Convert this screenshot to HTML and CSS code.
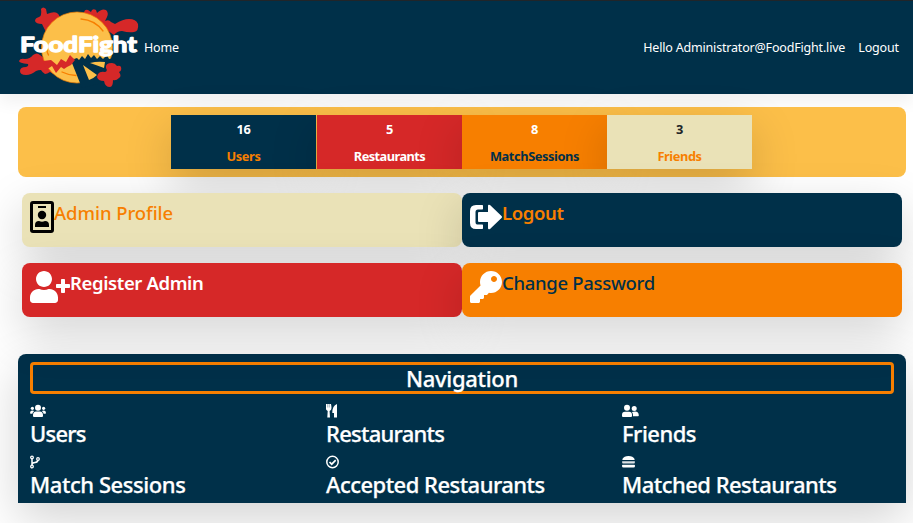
FILE: index.html
```html
<!DOCTYPE html>
<html lang="en">
<head>
<meta charset="utf-8">
<title>FoodFight</title>
<link rel="stylesheet" href="styles.css">
</head>
<body>
<header class="topbar">
  <svg class="logo" viewBox="16 5 126 84" role="img" aria-label="FoodFight">
    <g fill="#d62828">
      <path d="M41 9q2-3 5 0l1 5q7-3 10-1 4 3 2 7L48 35l-3-5-3-6q-6 0-7-3 0-3 4-4 3-1 2-8z"/>
      <path d="M84 14q0-5 4-4l3 2q1-4 5-2l1 3q5-5 9-3 3 3 1 7l-2 4q4-2 6 1l4 2q8-5 14-5 7 0 9 5 1 7-4 8-5 1-12-1-5 0-8 4z"/>
      <path d="M19 61q1-3 6-2 5 0 8-4 4-3 7 0l10 8 16 14q-5 1-7-1-6-2-9-4-3 2-5 2-3-2-4-4-3 0-5 1-5 4-10 4-6 0-6-4 0-4 6-4 3-1 2-3-9-1-9-3z"/>
    </g>
    <circle cx="77" cy="47.500" r="35.500" fill="#fcbf49" stroke="#f77f00" stroke-width=".7"/>
    <path fill="#003049" d="M70 58l4 1 3-1 2 2 3-4 3 3 3-5 3 4 3-3 3 4 3-3 3 3 4-4 2 4 6-1-1 7q-4 13-13 18l-19 5z"/>
    <path fill="#d62828" d="M43 61l8-1 6 5 4-6 5 3 4-7 5 5-4 5-4 2-3 2-3-2-5 6-4-7-6 4z"/>
    <path fill="#fcbf49" d="M83 65l14 10q-4 4-8 5zM90 63q7-2 15-1l-1 6q-8-3-14-5z"/>
    <path fill="#d62828" d="M98 74q2-3 7-2 3-1 1-4-1-5 6-5 3 0 5 3 3-1 4 1 1 4-2 5 3 4 0 6-3 3-6 2 0 7-3 7-5 0-6-6-6 0-7-4z"/>
    <path fill="none" stroke="#f77f00" stroke-width="1.300" stroke-linecap="round" d="M81 19q14 1 22 12M47 49q0 4 1.500 6M62 72q6 3 14 3.500"/>
    <text class="logo-text" x="20" y="51.500" textLength="117" lengthAdjust="spacingAndGlyphs">FoodFight</text>
  </svg>
  <a class="link home">Home</a>
  <span class="link hello">Hello Administrator@FoodFight.live</span>
  <a class="link logout">Logout</a>
</header>

<main>
  <section class="stats">
    <div class="stat navy"><b>16</b><b class="t-orange">Users</b></div>
    <div class="stat red"><b>5</b><b class="tight">Restaurants</b></div>
    <div class="stat orange"><b>8</b><b class="t-navy">MatchSessions</b></div>
    <div class="stat cream"><b class="t-dark">3</b><b class="t-orange">Friends</b></div>
  </section>

  <section class="actions">
    <div class="card cream">
      <svg width="24" height="32" viewBox="0 0 24 32"><rect x="1.500" y="1.500" width="21" height="29" rx="1.500" fill="none" stroke="#000" stroke-width="3"/><path d="M8 5h8v2H8zM5 26v-2q0-4 4-4 3 1.500 6 0 4 0 4 4v2z"/><circle cx="12" cy="14" r="4.200"/></svg>
      <span class="t-orange">Admin Profile</span>
    </div>
    <div class="card navy">
      <svg width="32" height="32" viewBox="0 0 32 32" fill="#fff"><path d="M13 4.700v3q0 .7-.7.700H8Q5.500 8.400 5.500 11v10q0 2.600 2.500 2.600h4.300q.7 0 .7.700v3q0 .7-.7.700H6q-6 0-6-6V10q0-6 6-6h6.300q.7 0 .7.700z"/><path d="M9 11h9V5q0-2 2-1l11.500 11q1 1 0 2L20 28q-2 1-2-1v-6H9q-1 0-1-1v-8q0-1 1-1z"/></svg>
      <span class="t-orange semi">Logout</span>
    </div>
    <div class="card red">
      <svg width="40" height="32" viewBox="0 0 640 512" fill="#fff"><path d="M624 208h-64v-64c0-8.800-7.200-16-16-16h-32c-8.800 0-16 7.200-16 16v64h-64c-8.800 0-16 7.200-16 16v32c0 8.800 7.200 16 16 16h64v64c0 8.800 7.200 16 16 16h32c8.800 0 16-7.200 16-16v-64h64c8.800 0 16-7.200 16-16v-32c0-8.800-7.200-16-16-16zm-400 48c70.700 0 128-57.300 128-128S294.700 0 224 0 96 57.300 96 128s57.300 128 128 128zm89.600 32h-16.700c-22.200 10.200-46.900 16-72.900 16s-50.600-5.800-72.900-16h-16.700C60.200 288 0 348.200 0 422.400V464c0 26.500 21.500 48 48 48h352c26.500 0 48-21.500 48-48v-41.600c0-74.200-60.200-134.400-134.400-134.400z"/></svg>
      <span class="semi">Register Admin</span>
    </div>
    <div class="card orange">
      <svg width="32" height="32" viewBox="0 0 512 512" fill="#fff"><path d="M512 176c0 97.200-78.800 176-176 176-11.200 0-22.200-1.100-32.800-3.100l-24 27A24 24 0 0 1 261.200 384H224v40c0 13.300-10.700 24-24 24h-40v40c0 13.300-10.700 24-24 24H24c-13.300 0-24-10.700-24-24v-78.100c0-6.400 2.500-12.500 7-17l161.800-161.800C162.900 213.800 160 195.300 160 176 160 78.800 238.800 0 336 0s176 78.500 176 176zM336 128c0 26.500 21.500 48 48 48s48-21.500 48-48-21.500-48-48-48-48 21.500-48 48z"/></svg>
      <span class="t-navy snug">Change Password</span>
    </div>
  </section>

  <section class="nav navy">
    <h2>Navigation</h2>
    <div class="nav-grid">
      <a class="item"><svg width="16" height="13" viewBox="0 0 16 13"><circle cx="8" cy="3.200" r="3"/><circle cx="2.400" cy="3.800" r="1.600"/><circle cx="13.600" cy="3.800" r="1.600"/><path d="M3 11.500v-1Q3.200 7 6 7h4q2.800 0 3 3.500v1q0 1-1 1H4q-1 0-1-1zM0 8.500Q0 6 2 6q2 0 2 .8Q2.500 8 2.400 9.300H.8Q0 9.300 0 8.500zM16 8.500Q16 6 14 6q-2 0-2 .8 1.500 1.200 1.600 2.500h1.600q.8 0 .8-.8z"/></svg><span class="narrow">Users</span></a>
      <a class="item"><svg width="11" height="14" viewBox="0 0 11 14"><path d="M0 0h5q1 4.500-.1 6l-1.300 1 .4 6.500H1.300L1.700 7 .4 6Q-.5 4.500 0 0zM11 0v13.500H8V9H6.300Q6.300 1.500 11 0z"/><path stroke="#003049" stroke-width=".35" d="M1.700 0v3.500M3.300 0v3.500"/></svg><span class="narrow">Restaurants</span></a>
      <a class="item"><svg width="17" height="13" viewBox="0 0 17 13"><circle cx="5" cy="3.300" r="3"/><circle cx="12.200" cy="3.900" r="2.500"/><path d="M0 11.500v-1Q0 7.200 3 7.200h4q3 0 3 3.300v1q0 1-1 1H1q-1 0-1-1zM10 7.400q.8-.4 3-.4 3.800 0 3.800 4 0 .8-.8.800h-5Q11.300 9 10 7.400z"/></svg><span>Friends</span></a>
      <a class="item"><svg width="10" height="14" viewBox="0 0 10 14"><path fill="none" stroke="#fff" stroke-width="1.500" d="M2 3v8M2 9.500q0-1.800 3-2 3-.2 3-3"/><g fill="#003049" stroke="#fff" stroke-width="1.300"><circle cx="2" cy="2.400" r="1.300"/><circle cx="2" cy="11.500" r="1.300"/><circle cx="8" cy="4" r="1.300"/></g></svg><span class="wide">Match Sessions</span></a>
      <a class="item"><svg width="13" height="14" viewBox="0 0 13 14"><path fill="none" stroke="#fff" stroke-width="1.500" d="M12.200 7A5.700 5.700 0 1 1 .8 7a5.700 5.700 0 0 1 11.400 0z"/><path fill="none" stroke="#fff" stroke-width="1.700" d="M3.500 7l2.200 2.200 4-4"/></svg><span>Accepted Restaurants</span></a>
      <a class="item"><svg width="13" height="14" viewBox="0 0 13 14"><path d="M1 5Q0 5 .4 4 2 1 6.500 1t6.100 3q.4 1-.6 1zM.4 10h12.200q.4 0 .4.600v.4q0 1.500-1.500 1.500h-10Q0 12.500 0 11v-.4q0-.6.4-.6z"/><path fill="#dce1e5" d="M.5 6.300h12q.5 0 .5.800t-.5.800H.5Q0 7.900 0 7.100t.5-.8zM.5 8.500h12v.8H.5z"/></svg><span>Matched Restaurants</span></a>
    </div>
  </section>
</main>
</body>
</html>
```
FILE: styles.css
```css
* { box-sizing: border-box; }
body {
  margin: 0;
  height: 523px;
  overflow: hidden;
  background: #fff;
  color: #fff;
  font-family: "Noto Sans", sans-serif;
}
.topbar {
  display: flex;
  align-items: center;
  height: 94px;
  padding: 0 14px 0 16px;
  border-top: 1px solid #212529;
  background: #003049;
  box-shadow: 0 8px 16px rgba(0, 0, 0, .06);
}
.logo { width: 126px; height: 84px; flex: none; margin-top: -1px; }
.logo-text {
  font: 700 21.5px Lato, sans-serif;
  fill: #fff;
  stroke: #fff;
  stroke-width: 1.3px;
  stroke-linejoin: round;
}
.link { font-size: 12.5px; line-height: 18px; letter-spacing: -.14px; padding-top: 1px; }
.home { margin-left: 2px; }
.hello { margin-left: auto; letter-spacing: -.18px; padding: 0; }
.logout { margin-left: 13px; }

.navy { background: #003049; }
.red { background: #d62828; }
.orange { background: #f77f00; }
.cream { background: #eae2b7; }
.t-orange { color: #f77f00; }
.t-navy { color: #003049; }
.t-dark { color: #212529; }

main { padding: 13px 7px 0 18px; }
.stats {
  display: flex;
  justify-content: center;
  height: 70px;
  padding: 8px 0;
  padding-right: 1px;
  border-radius: 8px;
  background: #fcbf49;
}
.stat {
  display: flex;
  flex-direction: column;
  align-items: center;
  gap: 9px;
  width: 145px;
  padding-top: 5px;
  font-size: 12.8px;
  line-height: 18px;
  letter-spacing: -.4px;
  box-shadow: 0 16px 48px rgba(0, 0, 0, .175);
}
.stat:first-child { margin-right: 1px; }
.stat .tight { letter-spacing: -.55px; }

.actions {
  display: grid;
  grid-template-columns: 440px 440px;
  row-gap: 16px;
  padding: 16px 4px 0;
}
.card {
  display: flex;
  align-items: flex-start;
  height: 54px;
  padding: 8px;
  border-radius: 8px;
  font-size: 18.5px;
  font-weight: 500;
  line-height: 24px;
  letter-spacing: -.05px;
  box-shadow: 0 16px 48px rgba(0, 0, 0, .175);
}
.card svg { flex: none; }
.card .semi { font-weight: 600; letter-spacing: -.38px; }
.card .snug { letter-spacing: -.3px; }

.nav {
  height: 149px;
  margin-top: 37px;
  padding: 8px 12px 0;
  border-radius: 8px 8px 0 0;
  box-shadow: 0 16px 48px rgba(0, 0, 0, .175);
}
h2 {
  height: 32px;
  margin: 0;
  border: 3px solid #f77f00;
  border-radius: 4px;
  font-size: 22px;
  font-weight: 500;
  line-height: 26px;
  letter-spacing: -.3px;
  text-align: center;
  -webkit-text-stroke: .25px currentColor;
}
.nav-grid {
  display: grid;
  grid-template-columns: repeat(3, 296px);
  grid-auto-rows: 51px;
  padding-top: 10px;
}
.item {
  display: flex;
  flex-direction: column;
  font-size: 22px;
  font-weight: 500;
  line-height: 30px;
  letter-spacing: -.52px;
  white-space: nowrap;
}
.item span { margin-top: -1px; -webkit-text-stroke: .25px currentColor; }
.item svg { height: 14px; margin-bottom: 1px; flex: none; fill: #fff; align-self: flex-start; }
.item .narrow { letter-spacing: -.75px; }
.item .wide { letter-spacing: -.43px; }
```
